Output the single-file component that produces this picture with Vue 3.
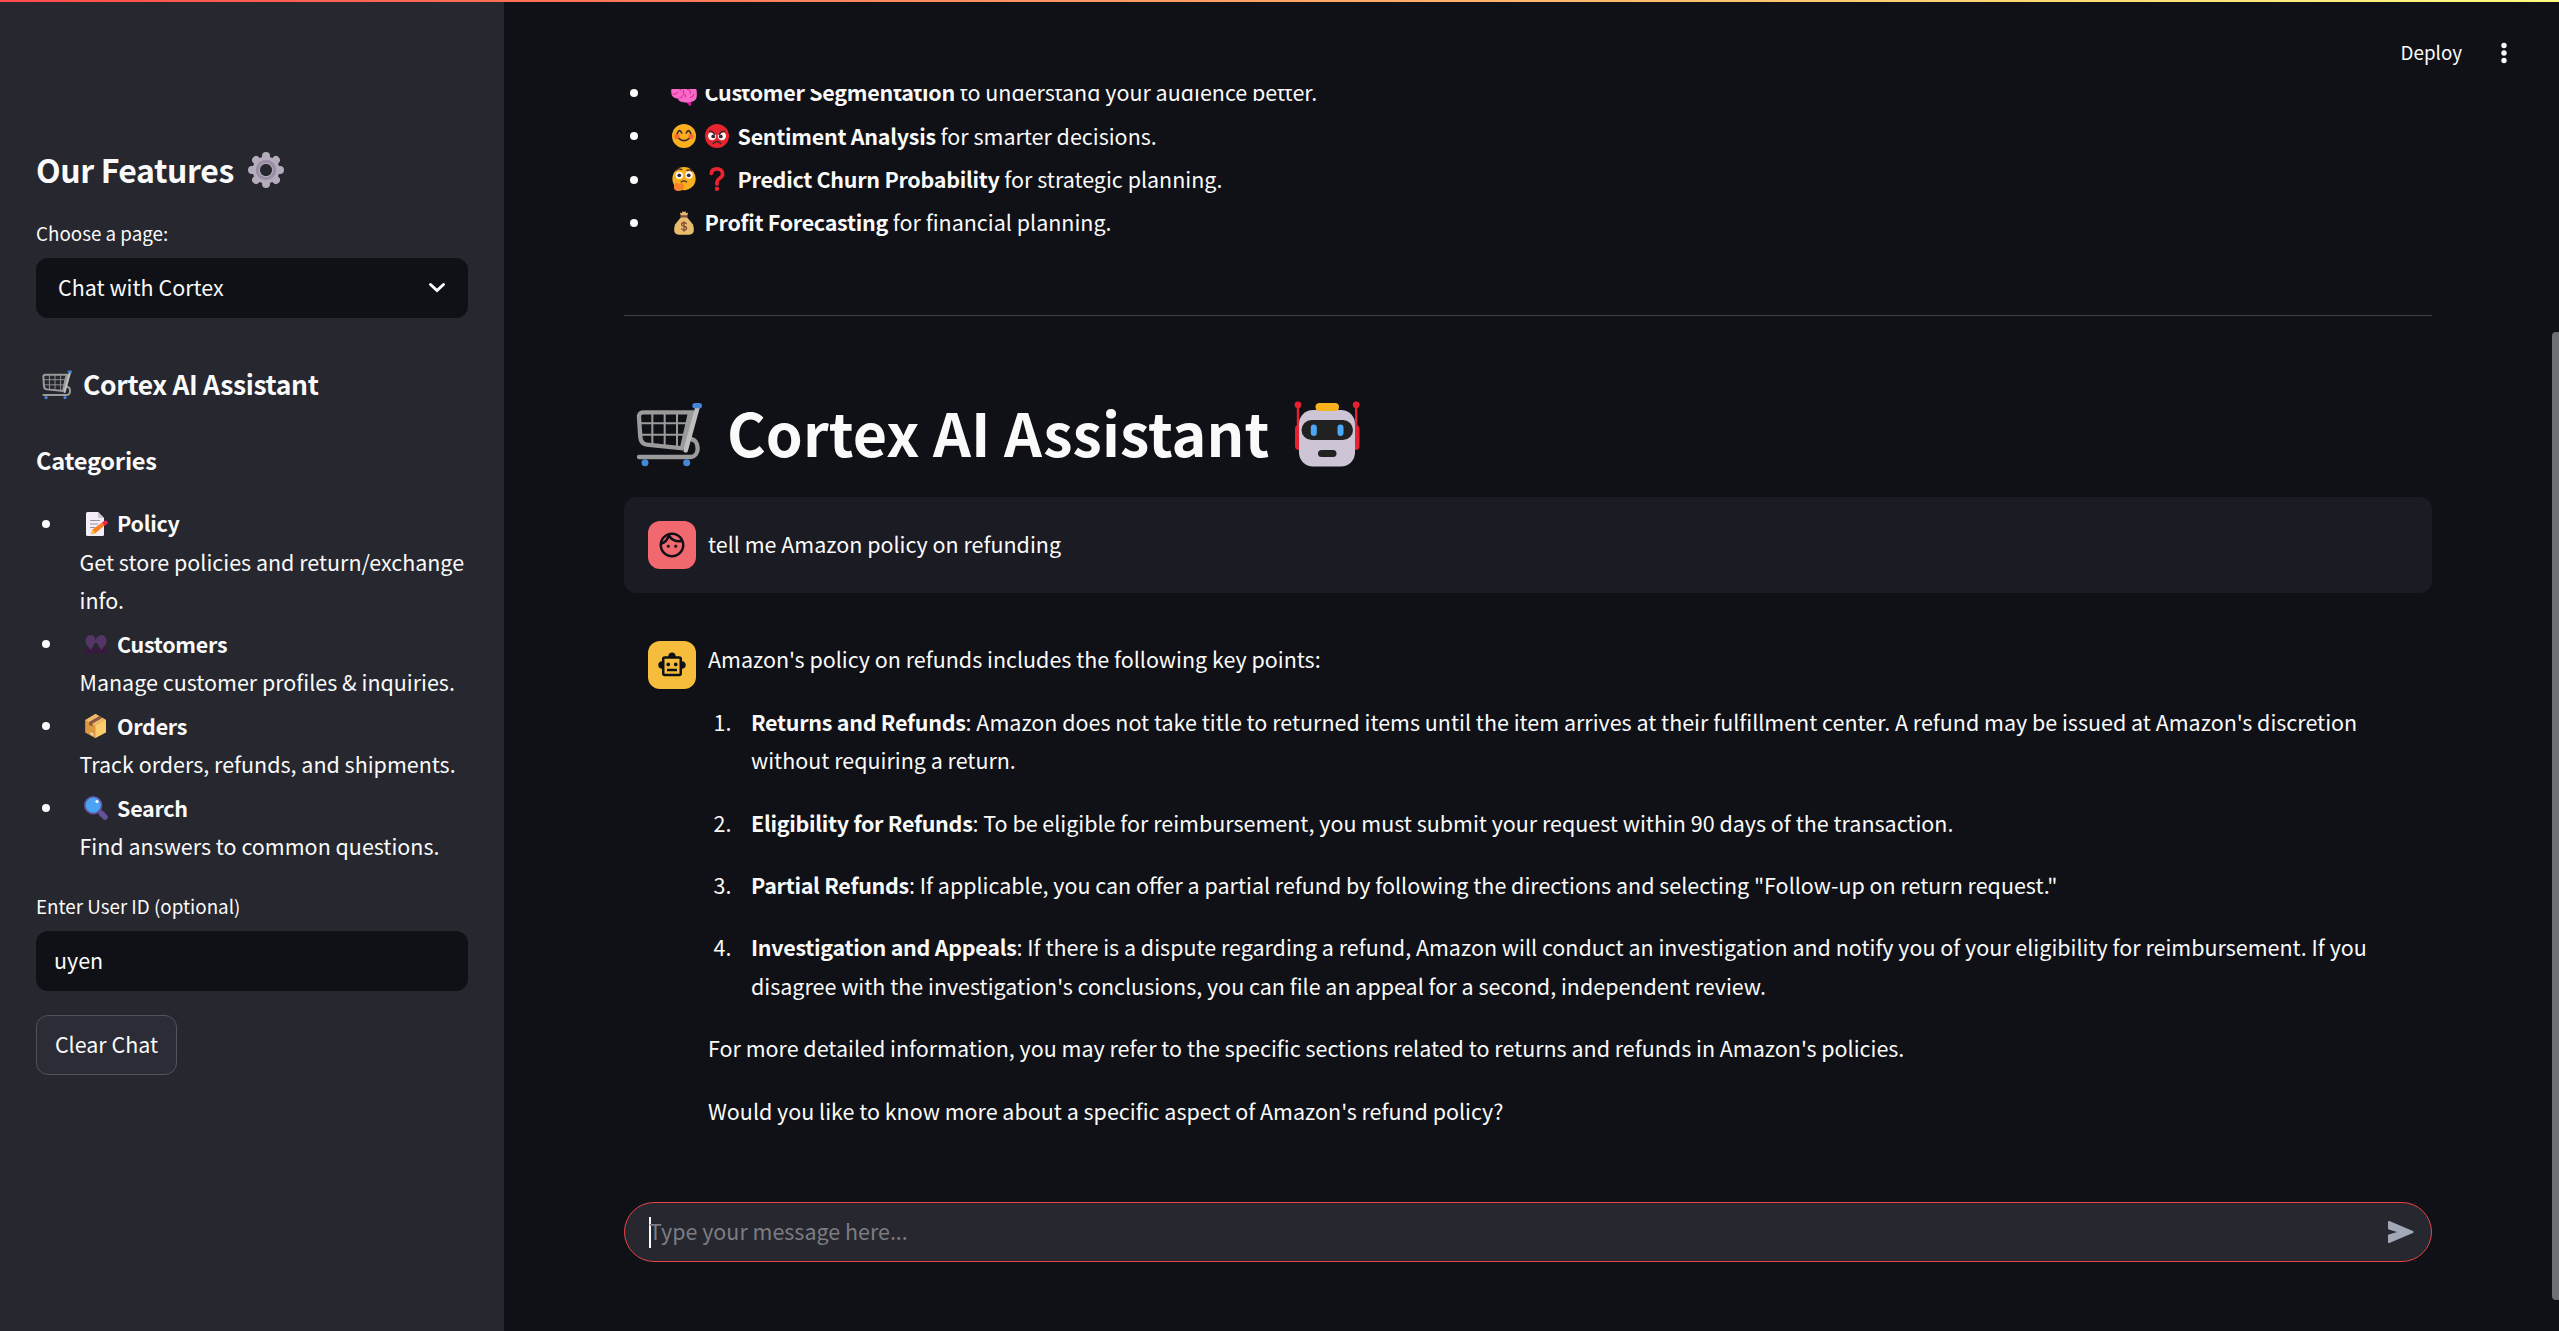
<script setup>
const categories = [
  { icon: 'memo', name: 'Policy', text: 'Get store policies and return/exchange info.' },
  { icon: 'people', name: 'Customers', text: 'Manage customer profiles & inquiries.' },
  { icon: 'box', name: 'Orders', text: 'Track orders, refunds, and shipments.' },
  { icon: 'search', name: 'Search', text: 'Find answers to common questions.' },
]
const features = [
  { icons: ['brain'], name: 'Customer Segmentation', text: ' to understand your audience better.' },
  { icons: ['smile', 'angry'], name: 'Sentiment Analysis', text: ' for smarter decisions.' },
  { icons: ['think', 'question'], name: 'Predict Churn Probability', text: ' for strategic planning.' },
  { icons: ['money'], name: 'Profit Forecasting', text: ' for financial planning.' },
]
const points = [
  { name: 'Returns and Refunds', text: ": Amazon does not take title to returned items until the item arrives at their fulfillment center. A refund may be issued at Amazon's discretion without requiring a return." },
  { name: 'Eligibility for Refunds', text: ': To be eligible for reimbursement, you must submit your request within 90 days of the transaction.' },
  { name: 'Partial Refunds', text: ': If applicable, you can offer a partial refund by following the directions and selecting "Follow-up on return request."' },
  { name: 'Investigation and Appeals', text: ": If there is a dispute regarding a refund, Amazon will conduct an investigation and notify you of your eligibility for reimbursement. If you disagree with the investigation's conclusions, you can file an appeal for a second, independent review." },
]
</script>

<template>
  <div class="app">
    <svg class="sprite" aria-hidden="true">
      <symbol id="cart" viewBox="48 36 198 198">
        <g fill="none" stroke="#9b9b9b">
          <path d="M97 70V166M134 70V168M171 70V174M60 100H208M60 134H200" stroke-width="6" />
          <path d="M222 67H70Q56 67 57 82L61 142Q63 162 80 164L190 175" stroke-width="13" />
          <path d="M212 147C240 150 240 199 212 201H57" stroke-width="13" stroke-linecap="round" />
        </g>
        <path d="M204 66H230L200 182L180 172Z" fill="#9b9b9b" />
        <path d="M232 54L197 181" stroke="#bebebe" stroke-width="14" stroke-linecap="round" />
        <rect x="217" y="39" width="29" height="16" rx="8" fill="#4487d6" />
        <circle cx="75" cy="218" r="10.5" fill="#4487d6" /><circle cx="200" cy="218" r="10.5" fill="#4487d6" />
      </symbol>
      <symbol id="robot" viewBox="1294 400 70 68">
        <path d="M1299 405V430M1357.2 405V430" stroke="#e8202f" stroke-width="2.4" />
        <circle cx="1299" cy="404.8" r="3.4" fill="#e8202f" /><circle cx="1357.2" cy="404.8" r="3.4" fill="#e8202f" />
        <rect x="1296" y="425" width="10" height="25" rx="4" fill="#e8202f" /><rect x="1350.5" y="425" width="10" height="25" rx="4" fill="#e8202f" />
        <rect x="1300" y="410" width="56" height="56.5" rx="14" fill="#cdc4d6" />
        <rect x="1316.5" y="403" width="23.5" height="8" rx="4" fill="#f9b21f" />
        <rect x="1302.5" y="420" width="51.5" height="20" rx="10" fill="#212121" />
        <rect x="1311.8" y="424.5" width="6" height="11.5" rx="3" fill="#4aa8f7" /><rect x="1338.5" y="424.5" width="6" height="11.5" rx="3" fill="#4aa8f7" />
        <rect x="1319" y="450" width="18.5" height="7" rx="3.5" fill="#212121" />
      </symbol>
      <symbol id="gear" viewBox="-18 -18 36 36">
        <g stroke="#b4acbc" stroke-width="8" stroke-linecap="round" stroke-linejoin="round">
          <path d="M0-14V-10M0 14V10M-14 0H-10M14 0H10M-9.9-9.9L-8-8M9.9-9.9L8-8M-9.9 9.9L-8 8M9.9 9.9L8 8" />
        </g>
        <circle r="10" fill="none" stroke="#b4acbc" stroke-width="7" />
        <circle r="8.5" fill="none" stroke="#998ea4" stroke-width="3.4" />
        <circle r="6.5" fill="none" stroke="#b4acbc" stroke-width="1.2" />
        <circle r="5.9" fill="#26272f" />
      </symbol>
      <symbol id="smile" viewBox="0 0 32 32">
        <circle cx="16" cy="16" r="16" fill="#f8b01f" />
        <circle cx="6.5" cy="16.5" r="3.6" fill="#fb6a2c" /><circle cx="25.5" cy="16.5" r="3.6" fill="#fb6a2c" />
        <path d="M7 12.5Q10 5.5 13 12M19 12Q22 5.5 25 12.5M9.5 19.5Q16 25 22.5 19.5" fill="none" stroke="#402a32" stroke-width="2.2" stroke-linecap="round" />
      </symbol>
      <symbol id="angry" viewBox="0 0 32 32">
        <circle cx="16" cy="16" r="16" fill="#e8242f" />
        <circle cx="9.5" cy="16" r="5.5" fill="#fff" /><circle cx="22.5" cy="16" r="5.5" fill="#fff" />
        <path d="M4 9L16 15L28 9V6H4Z" fill="#e8242f" />
        <circle cx="11" cy="16.5" r="2.6" fill="#402a32" /><circle cx="21" cy="16.5" r="2.6" fill="#402a32" />
        <path d="M6 9.5Q11 9.5 13 14M26 9.5Q21 9.5 19 14M11 26Q16 20.5 21 26" fill="none" stroke="#402a32" stroke-width="2" stroke-linecap="round" />
      </symbol>
      <symbol id="think" viewBox="0 0 32 33">
        <circle cx="16" cy="16" r="16" fill="#f8b01f" />
        <circle cx="9.5" cy="11.5" r="5" fill="#fff" /><circle cx="23" cy="11" r="5" fill="#fff" />
        <circle cx="9.5" cy="11.5" r="2.6" fill="#402a32" /><circle cx="22.5" cy="11.5" r="2.6" fill="#402a32" />
        <path d="M5 4.5Q8 1.5 13 3.5M20 4.5Q24 3 27 5.5M12 20.5Q16 17.5 19.5 20.5" fill="none" stroke="#402a32" stroke-width="1.8" stroke-linecap="round" />
        <path d="M3.5 23Q3.5 20 6 22L8 23L14 22Q17 22 15 24.5Q18 28 13.5 31.5Q10 33.5 6 32.5Q2 32 2 27Z" fill="#f9812a" />
      </symbol>
      <symbol id="question" viewBox="0 0 32 32">
        <path d="M8.5 8.5C9 3 14 2.5 16 2.5C20 2.5 23.5 5 23.5 9.5C23.5 15 16 15 16 20V22.5" fill="none" stroke="#e8242f" stroke-width="5" stroke-linecap="round" />
        <circle cx="16" cy="29" r="2.9" fill="#e8242f" />
      </symbol>
      <symbol id="money" viewBox="0 0 32 32">
        <path d="M12 7L10.5 2L13 3L14.5 0L16 1.5L17.5 0L19 3L21.5 2L20 7Z" fill="#e8bc6c" />
        <path d="M12.5 7.5H19.5L28 18Q32 31.5 23 31.5H9Q0 31.5 4 18Z" fill="#e8bc6c" />
        <rect x="11" y="5.5" width="10" height="3.2" rx="1.5" fill="#7c4f45" />
        <path d="M16 13.5V27.5M19.5 17.5Q18.5 15.5 16 15.5Q12.7 15.5 12.7 18Q12.7 20 16 20.5Q19.5 21 19.5 23Q19.5 25.5 16 25.5Q13 25.5 12.5 23.3" fill="none" stroke="#7c3f35" stroke-width="1.5" />
      </symbol>
      <symbol id="brain" viewBox="0 0 32 32">
        <path d="M18 26L25.500 25V32Q25 34 23.500 33Q20 30 18 26Z" fill="#e3129c" />
        <path d="M-1 15Q-2 7 7 4Q18-1 26 4Q34 8 33 18Q34 27 25 28Q19 29.500 14 28Q9 27 8 23.500Q-1 23 -1 15Z" fill="#f76ac6" />
        <path d="M1 17Q6 19 8 14M9 23Q14 23 15 18M15 12V16Q19 17 18 22M20 11Q26 12 24 17M24 22Q29 22 29 17M7 9Q11 9 12 13" fill="none" stroke="#e3129c" stroke-width="1.2" />
      </symbol>
      <symbol id="memo" viewBox="0 0 24 24">
        <path d="M3.5 0H14L20 6V22.5Q20 24 18.5 24H3.5Q2 24 2 22.5V1.5Q2 0 3.5 0Z" fill="#f3eef8" />
        <path d="M14 0L20 6H15.5Q14 6 14 4.5Z" fill="#cdc4d6" />
        <path d="M6 8.5H16M6 12H14M6 15.5H11" stroke="#998ea4" stroke-width="1.1" />
        <path d="M7 22L8.5 17.5L18 10.5L20.5 13.5L11 21.5Z" fill="#fb7f25" />
        <path d="M7 22.5L8.5 17.5L11.5 21Z" fill="#f9c23c" />
        <path d="M18 10.5L21 8.5Q23.5 8.5 24 11.5L20.5 14Z" fill="#f8204f" />
      </symbol>
      <symbol id="people" viewBox="0 0 24 24">
        <path d="M0 20.5Q0 16 6.5 16Q10 16 12 17Q14 16 17.5 16Q24 16 24 20.5V21.5H0Z" fill="#37183f" />
        <path d="M6.5 3Q11 3 11.5 8.5Q13 3 17.5 3Q22.5 3 22.5 9.5Q22.5 12.5 20 14.5L17.5 18L15 14.5L13 11H11L9 14.5L6.5 18L4 14.5Q1.5 12.5 1.5 9.5Q1.5 3 6.5 3Z" fill="#533566" />
      </symbol>
      <symbol id="box" viewBox="0 0 24 24">
        <path d="M1.5 6L11.5 0L22 6V18.5L11.5 24L1.5 18.5Z" fill="#fccd6c" />
        <path d="M1.5 6L11.5 11.5V24L1.5 18.5Z" fill="#dc9840" />
        <path d="M1.5 6L11.5 0L22 6L11.5 11.5Z" fill="#efb967" />
        <path d="M5 8L15.5 2L18.5 3.8L8.3 9.7V12.5L5 10.7Z" fill="#8c5746" />
        <path d="M6.5 18L9.5 19.5V22L6.5 20.5Z" fill="#ead7c6" />
      </symbol>
      <symbol id="search" viewBox="0 0 24 24">
        <path d="M17 17L21 21" stroke="#63529b" stroke-width="5.5" stroke-linecap="round" />
        <path d="M14 14L18 18" stroke="#63529b" stroke-width="3" />
        <circle cx="9.2" cy="9.2" r="8.4" fill="#4aa3f3" stroke="#63529b" stroke-width="1.6" />
        <circle cx="13" cy="5.5" r="1.6" fill="#fff" />
      </symbol>
    </svg>

    <div class="decoration"></div>

    <aside class="sidebar">
      <h2>Our Features <svg class="gear"><use href="#gear" /></svg></h2>
      <label class="label">Choose a page:</label>
      <div class="field select">
        <span>Chat with Cortex</span>
        <svg width="18" height="12" viewBox="0 0 18 12"><path d="M2.5 2.5L9 8.5L15.5 2.5" fill="none" stroke="#fafafa" stroke-width="3" stroke-linecap="round" /></svg>
      </div>
      <h3><svg class="cart-small"><use href="#cart" /></svg>Cortex AI Assistant</h3>
      <h5>Categories</h5>
      <ul class="cats">
        <li v-for="c in categories" :key="c.name">
          <i class="dot"></i>
          <div class="cat">
            <div class="cat-name"><svg class="emoji"><use :href="'#' + c.icon" /></svg><strong>{{ c.name }}</strong></div>
            <div>{{ c.text }}</div>
          </div>
        </li>
      </ul>
      <label class="label user">Enter User ID (optional)</label>
      <div class="field"><span>uyen</span></div>
      <button class="clear">Clear Chat</button>
    </aside>

    <main class="main">
      <header class="header">
        <span class="deploy">Deploy</span>
        <svg width="8" height="22" viewBox="0 0 8 22"><g fill="#fafafa"><circle cx="4" cy="3.5" r="2.7" /><circle cx="4" cy="11" r="2.7" /><circle cx="4" cy="18.5" r="2.7" /></g></svg>
      </header>
      <section class="content">
        <ul class="features">
          <li v-for="f in features" :key="f.name">
            <i class="dot"></i>
            <span class="icons"><svg v-for="i in f.icons" :key="i" class="emoji"><use :href="'#' + i" /></svg></span>
            <span class="feature-text"><strong>{{ f.name }}</strong>{{ f.text }}</span>
          </li>
        </ul>
        <hr />
        <h1><svg class="cart-big"><use href="#cart" /></svg><span>Cortex AI Assistant</span><svg class="robot"><use href="#robot" /></svg></h1>
        <div class="message user-message">
          <div class="avatar red">
            <svg width="30" height="30" viewBox="0 0 24 24"><path d="M10.25 13c0 .69-.56 1.25-1.25 1.25S7.75 13.69 7.75 13s.56-1.25 1.25-1.25 1.25.56 1.25 1.25zM15 11.75c-.69 0-1.25.56-1.25 1.25s.56 1.25 1.25 1.25 1.25-.56 1.25-1.25-.56-1.25-1.25-1.25zm7 .25c0 5.52-4.48 10-10 10S2 17.52 2 12 6.48 2 12 2s10 4.48 10 10zM10.66 4.12C12.06 6.44 14.6 8 17.5 8c.46 0 .91-.05 1.34-.12C17.44 5.56 14.9 4 12 4c-.46 0-.91.05-1.34.12zM4.42 9.47c1.71-.97 3.03-2.55 3.66-4.44C6.37 6 5.05 7.58 4.42 9.47zM20 12c0-.78-.12-1.53-.33-2.24-.7.15-1.42.24-2.17.24-3.13 0-5.92-1.44-7.76-3.69C8.69 8.87 6.6 10.88 4 11.86c.01.04 0 .09 0 .14 0 4.41 3.59 8 8 8s8-3.59 8-8z" /></svg>
          </div>
          <p>tell me Amazon policy on refunding</p>
        </div>
        <div class="message reply">
          <div class="avatar yellow">
            <svg width="30" height="30" viewBox="0 0 24 24"><path d="M20 9V7c0-1.1-.9-2-2-2h-3c0-1.66-1.34-3-3-3S9 3.34 9 5H6c-1.1 0-2 .9-2 2v2c-1.66 0-3 1.34-3 3s1.34 3 3 3v4c0 1.1.9 2 2 2h12c1.1 0 2-.9 2-2v-4c1.66 0 3-1.34 3-3s-1.34-3-3-3zm-2 10H6V7h12v12zm-9-6c-.83 0-1.5-.67-1.5-1.5S8.17 10 9 10s1.5.67 1.5 1.5S9.83 13 9 13zm7.5-1.5c0 .83-.67 1.5-1.5 1.5s-1.5-.67-1.5-1.5.67-1.5 1.5-1.5 1.5.67 1.5 1.5zM8 15h8v2H8v-2z" /></svg>
          </div>
          <div class="answer">
            <p>Amazon's policy on refunds includes the following key points:</p>
            <div v-for="(p, n) in points" :key="p.name" class="point">
              <span class="num">{{ n + 1 }}.</span>
              <p><strong>{{ p.name }}</strong>{{ p.text }}</p>
            </div>
            <p>For more detailed information, you may refer to the specific sections related to returns and refunds in Amazon's policies.</p>
            <p>Would you like to know more about a specific aspect of Amazon's refund policy?</p>
          </div>
        </div>
      </section>
      <div class="composer">
        <i class="caret"></i>
        <span class="placeholder">Type your message here...</span>
        <svg width="28" height="24" viewBox="0 0 28 24"><path d="M2 2L25.5 12L2 22V15.5L13.5 12L2 8.5Z" fill="#a3a8b8" stroke="#a3a8b8" stroke-width="2" stroke-linejoin="round" /></svg>
      </div>
      <div class="scroll-thumb"></div>
    </main>
  </div>
</template>

<style>
html, body { margin: 0; background: #0f1116; }
</style>
<style scoped>
.app {
  position: relative;
  display: flex;
  height: 1331px;
  overflow: hidden;
  background: #0f1116;
  color: #fafafa;
  font-family: "Noto Sans CJK SC", "Noto Sans", sans-serif;
  font-size: 21.48px;
  line-height: 38.4px;
}
h1, h2, h3, h5, p, ul { margin: 0; padding: 0; font-weight: 700; }
p, ul { font-weight: 400; }
ul { list-style: none; }
strong { font-weight: 700; letter-spacing: -0.27px; }
.sprite { position: absolute; width: 0; height: 0; }
.decoration { position: absolute; top: 0; left: 0; right: 0; height: 2px; background: linear-gradient(90deg, #ff4b4b, #fffd80); }
.emoji { width: 24px; height: 24px; flex: none; overflow: visible; }
#brain { overflow: visible; }
.dot { flex: none; width: 8px; height: 8px; border-radius: 50%; background: #fafafa; }

.sidebar { box-sizing: border-box; flex: none; width: 504px; padding: 148px 36px 0; background: #26272f; }
.sidebar h2 { display: flex; align-items: center; height: 43.2px; font-size: 32px; letter-spacing: -0.4px; }
.gear { width: 36px; height: 36px; margin-left: 14.5px; margin-top: 1px; }
.label { display: block; height: 30px; line-height: 30px; margin-top: 27.2px; font-size: 18.8px; }
.field { box-sizing: border-box; display: flex; align-items: center; height: 60px; margin-top: 9.6px; padding: 0 19px 1px 18px; border-radius: 12px; background: #0f1116; }
.select { justify-content: space-between; padding: 0 22px 1px; }
.select svg { margin-top: 2px; }
.sidebar h3 { display: flex; align-items: center; height: 36px; margin-top: 48.3px; font-size: 26.5px; letter-spacing: -0.37px; }
.cart-small { width: 30px; height: 30px; margin: 2px 11.5px 0 5.5px; }
.sidebar h5 { height: 32.4px; line-height: 32.4px; margin-top: 42.2px; font-size: 23.6px; letter-spacing: -0.24px; }
.cats { margin-top: 27.1px; }
.cats li { display: flex; margin-bottom: 4.6px; }
.cats .dot { margin: 16px 30px 0 6px; }
.cat { margin-left: -0.5px; }
.cat-name { display: flex; align-items: center; height: 39px; }
.cat-name .emoji { margin: 1px 9.5px 0 4px; }
.label.user { margin-top: 25.6px; }
.clear { box-sizing: border-box; display: block; width: 141px; height: 60px; margin-top: 24px; padding: 0 0 2px; border: 1px solid #51525a; border-radius: 12px; background: #2b2c36; color: inherit; font: inherit; }

.main { position: relative; flex: 1; display: flex; flex-direction: column; min-width: 0; }
.header { box-sizing: border-box; flex: none; display: flex; align-items: center; justify-content: flex-end; height: 89px; padding: 17px 51px 0 0; }
.deploy { font-size: 18.8px; margin: 0 38px 1px 0; }
.content { flex: 1; min-height: 0; overflow: hidden; padding: 0 120px; margin-right: 7px; }
.features { margin-top: -15.7px; }
.features li { display: flex; align-items: center; height: 38.4px; margin-bottom: 5px; }
.features .dot { margin: 1px 34px 0 6px; }
.icons { display: flex; gap: 9px; margin-right: 8.5px; }
.feature-text { white-space: pre; }
hr { height: 1px; margin: 73.2px 0 0; border: 0; background: #3e3f45; }
h1 { display: flex; align-items: center; height: 79.2px; margin-top: 76px; font-size: 59.1px; letter-spacing: 0.1px; }
.cart-big { width: 66px; height: 66px; margin: 7px 25px 0 12px; }
.robot { width: 70px; height: 68px; margin: 5px 0 0 23.5px; }
.message { display: flex; gap: 12px; padding: 24px; }
.user-message { align-items: center; box-sizing: border-box; height: 96px; margin-top: 25.8px; border-radius: 12px; background: #1a1b23; }
.user-message p { margin-bottom: 1px; }
.reply { margin-top: 24px; }
.avatar { flex: none; display: grid; place-items: center; width: 48px; height: 48px; border-radius: 12px; color: #0f1116; }
.avatar svg { fill: currentColor; }
.red { background: #f2686f; }
.yellow { background: #f6bd3d; }
.answer { display: flex; flex-direction: column; gap: 24px; margin-top: -0.6px; }
.point { display: flex; }
.num { flex: none; width: 37.4px; margin-left: 5.6px; }
.point p { flex: 1; }
.composer { box-sizing: border-box; flex: none; display: flex; align-items: center; height: 60px; margin: 0 127px 69px 120px; padding: 0 16px 0 24px; border: 1px solid #e8464b; border-radius: 30px; background: #26272f; }
.caret { width: 2px; height: 31px; margin-right: -2px; background: #fafafa; }
.placeholder { flex: 1; margin-bottom: 2px; color: #7c7d83; }
.scroll-thumb { position: absolute; right: 0; top: 332px; width: 7px; height: 968px; border-radius: 4px 0 0 4px; background: #6e6f73; }
</style>
